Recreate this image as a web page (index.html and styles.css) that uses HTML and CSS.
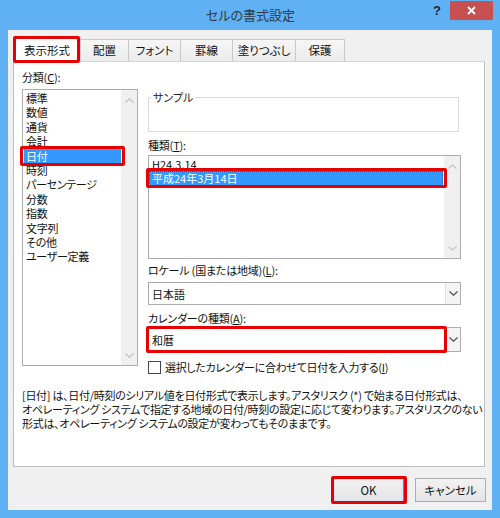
FILE: index.html
```html
<!DOCTYPE html>
<html lang="ja">
<head>
<meta charset="utf-8">
<title>セルの書式設定</title>
<link rel="stylesheet" href="styles.css">
</head>
<body>
<div class="window">
  <div class="titlebar">
    <div class="title">セルの書式設定</div>
    <div class="help">?</div>
    <div class="close"><svg width="9" height="9" viewBox="0 0 9 9"><path d="M1 1L8 8M8 1L1 8" stroke="#fff" stroke-width="1.8" fill="none"/></svg></div>
  </div>
  <div class="client">
    <div class="tabs">
      <div class="tab active t1 mark mark-tab">表示形式</div>
      <div class="tab t2">配置</div>
      <div class="tab t3">フォント</div>
      <div class="tab t4">罫線</div>
      <div class="tab t5">塗りつぶし</div>
      <div class="tab t6">保護</div>
    </div>
    <div class="panel">
      <div class="columns">
        <div class="left">
          <div class="label">分類(<u>C</u>):</div>
          <div class="listbox cat">
            <div class="items">
              <div class="item">標準</div>
              <div class="item">数値</div>
              <div class="item">通貨</div>
              <div class="item">会計</div>
              <div class="item selected mark mark-cat">日付</div>
              <div class="item">時刻</div>
              <div class="item">パーセンテージ</div>
              <div class="item">分数</div>
              <div class="item">指数</div>
              <div class="item">文字列</div>
              <div class="item">その他</div>
              <div class="item">ユーザー定義</div>
            </div>
            <div class="vscroll">
              <svg width="9" height="5" viewBox="0 0 9 5"><polyline points="0.5,4.5 4.5,0.8 8.5,4.5" fill="none" stroke="#c4c4c4" stroke-width="1.2"/></svg>
              <svg width="9" height="5" viewBox="0 0 9 5"><polyline points="0.5,0.5 4.5,4.2 8.5,0.5" fill="none" stroke="#c4c4c4" stroke-width="1.2"/></svg>
            </div>
          </div>
        </div>
        <div class="right">
          <fieldset class="sample"><legend>サンプル</legend></fieldset>
          <div class="label gap-types">種類(<u>T</u>):</div>
          <div class="listbox types">
            <div class="items">
              <div class="item">H24.3.14</div>
              <div class="item selected focused mark mark-type">平成24年3月14日</div>
            </div>
            <div class="vscroll">
              <svg width="9" height="5" viewBox="0 0 9 5"><polyline points="0.5,4.5 4.5,0.8 8.5,4.5" fill="none" stroke="#c4c4c4" stroke-width="1.2"/></svg>
              <svg width="9" height="5" viewBox="0 0 9 5"><polyline points="0.5,0.5 4.5,4.2 8.5,0.5" fill="none" stroke="#c4c4c4" stroke-width="1.2"/></svg>
            </div>
          </div>
          <div class="label gap-locale">ロケール (国または地域)(<u>L</u>):</div>
          <div class="combo locale">
            <div class="combo-text">日本語</div>
            <div class="combo-btn"><svg width="9" height="5" viewBox="0 0 9 5"><polyline points="0.5,0.5 4.5,4.2 8.5,0.5" fill="none" stroke="#555" stroke-width="1.3"/></svg></div>
          </div>
          <div class="label gap-cal">カレンダーの種類(<u>A</u>):</div>
          <div class="combo calendar">
            <div class="combo-text mark mark-combo">和暦</div>
            <div class="combo-btn"><svg width="9" height="5" viewBox="0 0 9 5"><polyline points="0.5,0.5 4.5,4.2 8.5,0.5" fill="none" stroke="#555" stroke-width="1.3"/></svg></div>
          </div>
          <div class="check"><span class="box"></span><span>選択したカレンダーに合わせて日付を入力する(<u>I</u>)</span></div>
        </div>
      </div>
      <p class="desc">[日付] は、日付/時刻のシリアル値を日付形式で表示します。アスタリスク (*) で始まる日付形式は、<br>オペレーティング システムで指定する地域の日付/時刻の設定に応じて変わります。アスタリスクのない<br>形式は、オペレーティング システムの設定が変わってもそのままです。</p>
    </div>
    <div class="buttons">
      <button class="btn default mark mark-btn">OK</button>
      <button class="btn">キャンセル</button>
    </div>
  </div>
</div>
</body>
</html>
```
FILE: styles.css
```css
html, body {
  margin: 0;
  padding: 0;
}
body {
  width: 500px;
  height: 518px;
  overflow: hidden;
  background: #60b0f4;
  font-family: "Noto Sans CJK JP", "Noto Sans", sans-serif;
  font-size: 11px;
  font-feature-settings: "palt";
  color: #111;
}
.window {
  display: flex;
  flex-direction: column;
  height: 518px;
}
.titlebar {
  height: 30px;
  display: flex;
  align-items: flex-start;
  padding-right: 7px;
  flex: none;
}
.title {
  flex: 1;
  text-align: center;
  padding-left: 72px;
  font-size: 13px;
  line-height: 30px;
  color: #2f3a44;
}
.help {
  width: 16px;
  margin: 4px 5px 0 0;
  text-align: center;
  font: bold 13px/14px "Liberation Sans", sans-serif;
  color: #1d2630;
}
.close {
  width: 43px;
  height: 19px;
  margin-top: 1px;
  background: #c75050;
  display: flex;
  align-items: center;
  justify-content: center;
}
.client {
  flex: 1;
  margin: 0 8px 8px;
  background: #f0f0f0;
  padding: 7px 6px 0 5px;
  display: flex;
  flex-direction: column;
}
.tabs {
  display: flex;
  align-items: flex-end;
  height: 24px;
  position: relative;
  z-index: 2;
}
.tab {
  box-sizing: border-box;
  height: 22px;
  border: 1px solid #c8c8c8;
  border-bottom: none;
  border-right: none;
  background: linear-gradient(#f6f6f6, #ebebeb);
  text-align: center;
  line-height: 21px;
  white-space: nowrap;
  font-size: 11.5px;
}
.tab:last-child { border-right: 1px solid #c8c8c8; }
.tab.active {
  height: 25px;
  margin-bottom: -1px;
  background: #fff;
  border-right: 1px solid #c8c8c8;
  line-height: 24px;
}
.tab.active + .tab { border-left: none; }
.t1 { width: 68px; }
.t2 { width: 47px; }
.t3 { width: 52px; }
.t4 { width: 52px; }
.t5 { width: 63px; }
.t6 { width: 50px; }

/* red annotation frames laid over the marked controls */
.mark { position: relative; }
.mark::after {
  content: "";
  position: absolute;
  border: 3px solid #e60000;
  border-radius: 2px;
  z-index: 5;
  pointer-events: none;
}
.mark-tab::after { left: -1px; right: 0; top: -2px; bottom: -1px; }
.mark-cat::after { left: -4px; right: -4px; top: -3px; bottom: -3px; }
.mark-type::after { left: -4px; right: -5px; top: -4px; bottom: -3px; }
.mark-combo::after { left: -3px; right: -2px; top: -2px; bottom: -2px; }
.mark-btn::after { left: -3px; right: -4px; top: -3px; bottom: -3px; }

.panel {
  box-sizing: border-box;
  height: 406px;
  margin-right: 1px;
  border: 1px solid #bdbdbd;
  border-top-color: #d5d5d5;
  background: #fff;
  padding: 8px 23px 0 8px;
  flex: none;
}
.columns {
  display: grid;
  grid-template-columns: 116px 313px;
  column-gap: 10px;
  align-items: start;
}
.label {
  height: 14px;
  line-height: 14px;
  white-space: nowrap;
  letter-spacing: -0.2px;
}
.listbox {
  box-sizing: border-box;
  display: flex;
  border: 1px solid #abadb3;
  background: #fff;
}
.cat {
  margin-top: 5px;
  height: 277px;
}
.items {
  flex: 1;
  min-width: 0;
  padding-top: 1px;
}
.item {
  height: 14.4px;
  line-height: 14.4px;
  white-space: nowrap;
  letter-spacing: -0.3px;
}
.cat .item {
  margin-left: 1px;
  padding-left: 2px;
}
.types .item {
  margin-right: 1px;
  padding-left: 3px;
  letter-spacing: 0;
}
.item.selected {
  background: #3399ff;
  color: #fff;
}
.focused {
  box-sizing: border-box;
  border: 1px dotted #1a4f8a;
  padding-left: 2px !important;
  line-height: 12.4px;
}
.vscroll {
  width: 16px;
  background: #f0f0f0;
  display: flex;
  flex-direction: column;
  justify-content: space-between;
  align-items: center;
  padding: 8px 0 7px;
  box-sizing: border-box;
}
.sample {
  box-sizing: border-box;
  height: 42px;
  margin: 20px 2px 0 0;
  padding: 0 0 0 2px;
  border: 1px solid #dcdcdc;
  min-inline-size: 0;
}
.sample legend {
  padding: 0 2px;
  line-height: 14px;
  font-size: 11px;
  color: #222;
}
.gap-types { margin-top: 6px; }
.types {
  margin-top: 3px;
  height: 104px;
}
.gap-locale { margin-top: 4px; }
.combo {
  box-sizing: border-box;
  display: flex;
  border: 1px solid #abadb3;
  background: #fff;
}
.locale {
  margin-top: 5px;
  height: 23px;
}
.gap-cal { margin-top: 6px; }
.calendar {
  margin-top: 2px;
  height: 25px;
}
.combo-text {
  flex: 1;
  padding-left: 3px;
  display: flex;
  align-items: center;
}
.combo-btn {
  width: 14px;
  border-left: 1px solid #e0e0e0;
  background: #f4f4f4;
  display: flex;
  align-items: center;
  justify-content: center;
}
.check {
  display: flex;
  align-items: center;
  gap: 4px;
  margin-top: 8px;
  height: 14px;
  line-height: 14px;
  white-space: nowrap;
  letter-spacing: -0.3px;
}
.box {
  width: 11px;
  height: 11px;
  border: 1px solid #444;
  background: #fff;
  flex: none;
}
.desc {
  margin: 14px 0 0;
  line-height: 14px;
  white-space: nowrap;
  letter-spacing: -0.3px;
}
.buttons {
  display: flex;
  justify-content: flex-end;
  gap: 11px;
  margin-top: 11px;
}
.btn {
  box-sizing: border-box;
  width: 71px;
  height: 24px;
  border: 1px solid #acacac;
  background: linear-gradient(#f2f2f2, #e4e4e4);
  font-family: "Noto Sans CJK JP", "Noto Sans", sans-serif;
  font-size: 11.5px;
  font-feature-settings: "palt";
  color: #111;
  padding: 0;
}
.btn.default {
  border-color: #3399ff;
  box-shadow: inset 0 0 0 1px #cde6ff;
}
```
